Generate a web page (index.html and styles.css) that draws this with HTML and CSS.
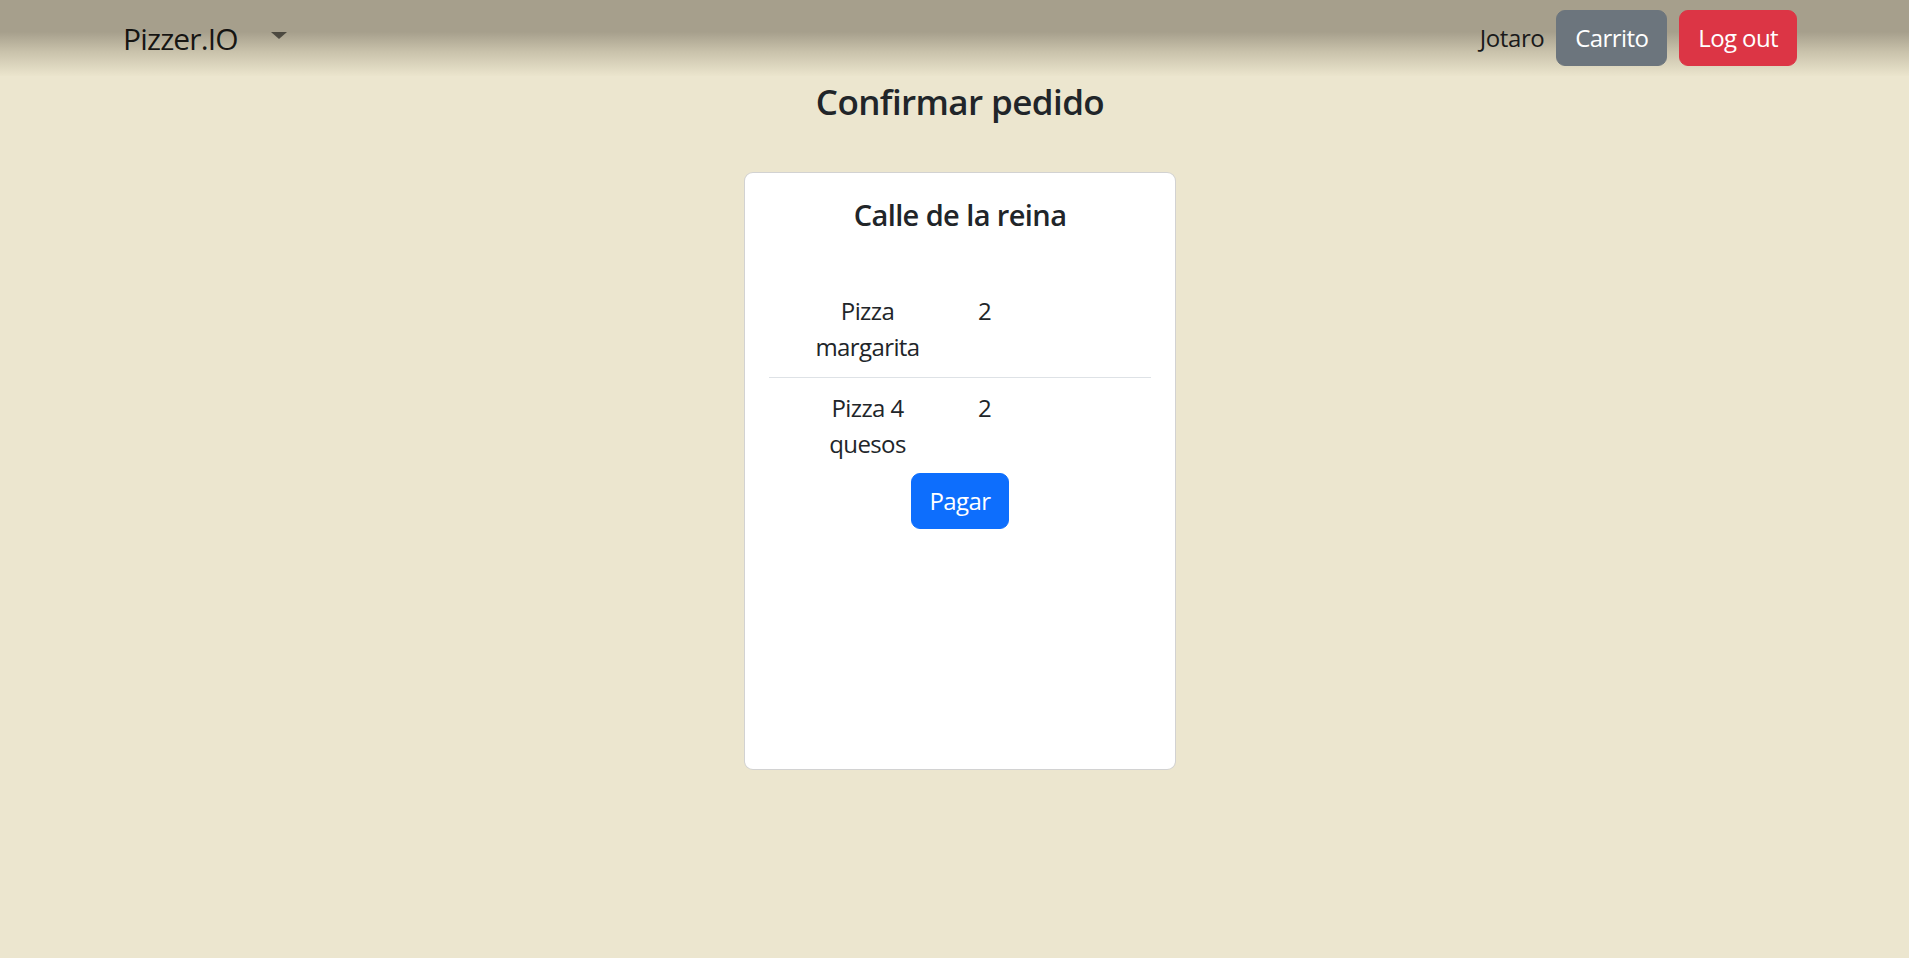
FILE: index.html
```html
<!DOCTYPE html>
<html lang="es">
<head>
<meta charset="utf-8">
<title>Pizzer.IO</title>
<link rel="stylesheet" href="styles.css">
</head>
<body>
<nav class="navbar">
  <div class="nav-left">
    <a class="brand" href="#">Pizzer.IO</a>
    <span class="caret" aria-hidden="true"></span>
  </div>
  <div class="nav-right">
    <span class="user">Jotaro</span>
    <button class="btn btn-secondary" type="button">Carrito</button>
    <button class="btn btn-danger" type="button">Log out</button>
  </div>
</nav>
<main class="main">
  <h4 class="title">Confirmar pedido</h4>
  <div class="card">
    <h5 class="card-title">Calle de la reina</h5>
    <table class="order">
      <colgroup><col class="col-name"><col></colgroup>
      <tbody>
        <tr class="row-sep">
          <td class="name">Pizza margarita</td>
          <td class="qty">2</td>
        </tr>
        <tr class="row-last">
          <td class="name">Pizza 4 quesos</td>
          <td class="qty">2</td>
        </tr>
      </tbody>
    </table>
    <div class="actions">
      <button class="btn btn-primary" type="button">Pagar</button>
    </div>
  </div>
</main>
</body>
</html>
```
FILE: styles.css
```css
* { box-sizing: border-box; }
html, body { margin: 0; padding: 0; }
body {
  background: #ece6cf;
  color: #212529;
  font-family: "Open Sans", "Noto Sans", "Liberation Sans", sans-serif;
  font-size: 24px;
  line-height: 1.5;
}
.navbar {
  height: 76px;
  display: flex;
  align-items: center;
  justify-content: space-between;
  padding: 0 112px 0 123px;
  background: linear-gradient(to bottom, #a69f8c 0%, #a69f8c 42%, #c9c2ab 68%, #ebe5cd 100%);
}
.nav-left { display: flex; align-items: center; }
.brand {
  font-size: 30px;
  line-height: 45px;
  color: rgba(0,0,0,.88);
  text-decoration: none;
  letter-spacing: -0.85px;
}
.caret {
  margin-left: 33px;
  margin-top: -6px;
  width: 0; height: 0;
  border-top: 7px solid rgba(0,0,0,.55);
  border-left: 8px solid transparent;
  border-right: 8px solid transparent;
}
.nav-right { display: flex; align-items: center; gap: 12px; }
.user { color: #1a1a1a; letter-spacing: -0.4px; }
.btn {
  font-family: inherit;
  font-size: 24px;
  line-height: 36px;
  padding: 9px 18px;
  border: 1px solid transparent;
  border-radius: 9px;
  color: #fff;
  cursor: pointer;
  letter-spacing: -0.6px;
}
.btn-secondary { background: #6c757d; border-color: #6c757d; }
.btn-danger { background: #dc3545; border-color: #dc3545; }
.btn-primary { background: #0d6efd; border-color: #0d6efd; }

.main {
  display: flex;
  flex-direction: column;
  align-items: center;
  padding-left: 11px;
}
.title {
  margin: 4px 0 49px;
  font-size: 35px;
  line-height: 43px;
  font-weight: 600;
  letter-spacing: -0.6px;
}
.card {
  width: 432px;
  height: 598px;
  background: #fff;
  border: 1px solid rgba(0,0,0,.175);
  border-radius: 9px;
  padding: 24px;
}
.card-title {
  margin: 0 0 48px;
  text-align: center;
  font-size: 29px;
  line-height: 36px;
  font-weight: 600;
  letter-spacing: -0.6px;
}
.order {
  width: 100%;
  border-collapse: collapse;
  table-layout: fixed;
}
.col-name { width: 197px; }
.order td {
  padding: 12px;
  vertical-align: top;
  line-height: 36px;
}
.order td.name { text-align: center; padding-left: 38px; padding-right: 38px; letter-spacing: -0.6px; }
.row-sep td { border-bottom: 1px solid #dee2e6; }
.row-last td { padding-bottom: 11px; }
.actions { display: flex; justify-content: center; }
```
